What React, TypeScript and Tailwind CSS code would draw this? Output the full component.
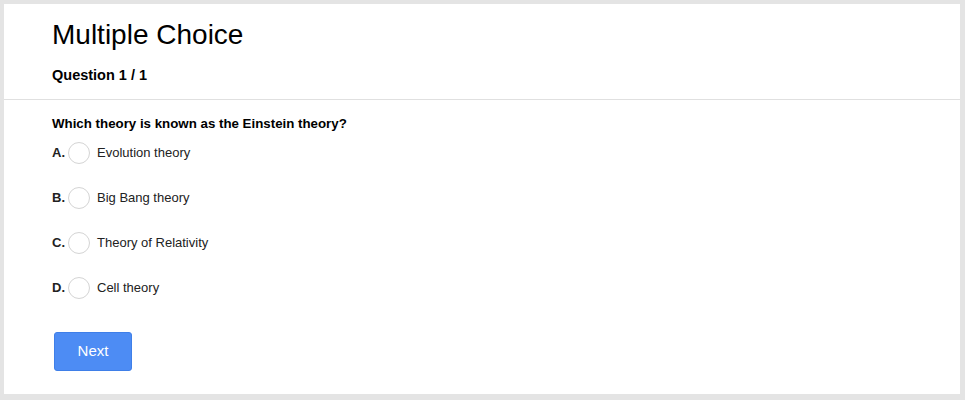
export default function App() {
  const options = [
    { key: "A.", text: "Evolution theory" },
    { key: "B.", text: "Big Bang theory" },
    { key: "C.", text: "Theory of Relativity" },
    { key: "D.", text: "Cell theory" },
  ];

  return (
    <div className="w-[965px] h-[400px] bg-[#e4e4e4] pt-1 pl-1 pr-[5px] pb-[6px] font-['Liberation_Sans',Arial,sans-serif]">
      <div className="h-full bg-white">
        <div className="px-12 pt-[15px] pb-[14px] border-b border-[#e0e0e0]">
          <h1 className="text-[28px] leading-[32px] text-black">Multiple Choice</h1>
          <h2 className="mt-[14px] text-[14.5px] leading-5 font-bold text-black">Question 1 / 1</h2>
        </div>

        <div className="px-12 pt-4">
          <p className="text-[13.3px] leading-4 font-bold text-black">
            Which theory is known as the Einstein theory?
          </p>

          <div className="mt-[10px] flex flex-col gap-[23px]">
            {options.map((o) => (
              <label key={o.key} className="flex items-center h-[22px] cursor-pointer">
                <span className="w-4 text-[13px] font-bold text-[#222]">{o.key}</span>
                <span className="w-[22px] h-[22px] rounded-full border border-[#d4d4d4] bg-white" />
                <span className="ml-[7px] text-[13px] text-[#222]">{o.text}</span>
              </label>
            ))}
          </div>

          <button className="mt-[33px] ml-0.5 w-[78px] h-[39px] rounded-[3px] bg-[#4d8cf4] border border-[#3f7fe8] text-white text-[15px]">
            Next
          </button>
        </div>
      </div>
    </div>
  );
}
